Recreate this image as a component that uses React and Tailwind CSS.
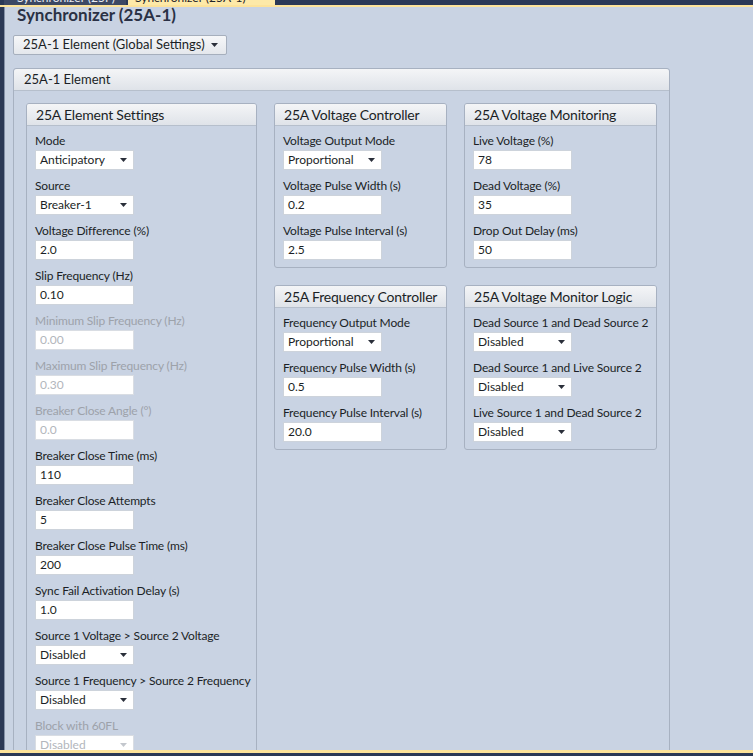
import React from 'react';

const font = { fontFamily: 'Lato, "Noto Sans", sans-serif' };

const Arrow = ({ disabled }) => (
  <svg width="7" height="4" viewBox="0 0 7 4">
    <path d="M0 0h7L3.5 4z" fill={disabled ? '#c3c7cd' : '#2a2f3a'} />
  </svg>
);

function Field({ label, value, select, disabled }) {
  return (
    <div className="flex flex-col">
      <div
        className={`h-[16px] leading-[16px] text-[12px] tracking-[-0.15px] whitespace-nowrap ${
          disabled ? 'text-[#9da2aa]' : 'text-[#1b1f26]'
        }`}
      >
        {label}
      </div>
      <div
        className={`mt-[1px] h-[20px] w-[99px] bg-white border flex items-center justify-between pl-[4px] pr-[6px] text-[12px] ${
          disabled ? 'border-[#d9dde3] text-[#b2b6bc]' : 'border-[#cdd3db] text-[#1b1f26]'
        }`}
      >
        <span>{value}</span>
        {select && <Arrow disabled={disabled} />}
      </div>
    </div>
  );
}

function Panel({ title, className, children }) {
  return (
    <div className={`border border-[#a7b1c1] rounded-[3px] overflow-hidden ${className}`}>
      <div className="h-[22px] bg-gradient-to-b from-[#f4f5f7] to-[#dfe3e9] border-b border-[#b6bfcc] px-[9px] text-[14px] tracking-[-0.2px] leading-[21px] text-[#1b1f26] whitespace-nowrap">
        {title}
      </div>
      <div className="flex flex-col gap-[8px] px-[8px] pt-[7px] pb-[7px]">{children}</div>
    </div>
  );
}

export default function App() {
  return (
    <div className="w-[753px] h-[756px] bg-[#2b3956] flex flex-col overflow-hidden" style={font}>
      {/* tab strip, mostly scrolled out of view */}
      <div className="h-[5px] flex overflow-hidden">
        <div className="ml-[4px] w-[122px] bg-[#3c4864] text-[#e8ebf1] text-[12px] leading-[14px] pl-[13px] -mt-[9px] h-[14px] whitespace-nowrap">
          Synchronizer (25F)
        </div>
        <div className="ml-[2px] w-[147px] bg-[#fde9a8] text-[#1f2329] text-[12px] leading-[14px] pl-[7px] -mt-[9px] h-[14px] whitespace-nowrap">
          Synchronizer (25A-1)
        </div>
      </div>
      <div className="h-[2px] bg-[#fde39a]" />

      <div className="flex-1 flex min-h-0">
        <div className="w-[4px] bg-[#2b3956]" />
        <div className="flex-1 bg-[#c9d3e3] border-l border-[#8592a8] px-[8px] overflow-hidden">
          <div className="ml-[4px] text-[17px] leading-[16px] font-bold text-[#2a3145]">
            Synchronizer (25A-1)
          </div>
          <div className="mt-[12px] w-[214px] h-[20px] border border-[#a6afbd] rounded-[2px] bg-gradient-to-b from-[#f6f7f9] to-[#e4e7ec] flex items-center justify-between pl-[9px] pr-[8px] text-[13px] text-[#1b1f26] whitespace-nowrap">
            <span>25A-1 Element (Global Settings)</span>
            <Arrow />
          </div>

          <div className="mt-[13px] w-[657px] border border-[#a7b1c1] rounded-[3px]">
            <div className="h-[22px] bg-gradient-to-b from-[#f4f5f7] to-[#dfe3e9] border-b border-[#b6bfcc] px-[10px] text-[13px] leading-[21px] text-[#1b1f26] rounded-t-[3px]">
              25A-1 Element
            </div>
            <div className="flex items-start gap-[17px] pl-[12px] pt-[12px]">
              <Panel title="25A Element Settings" className="w-[231px]">
                <Field label="Mode" value="Anticipatory" select />
                <Field label="Source" value="Breaker-1" select />
                <Field label="Voltage Difference (%)" value="2.0" />
                <Field label="Slip Frequency (Hz)" value="0.10" />
                <Field label="Minimum Slip Frequency (Hz)" value="0.00" disabled />
                <Field label="Maximum Slip Frequency (Hz)" value="0.30" disabled />
                <Field label="Breaker Close Angle (°)" value="0.0" disabled />
                <Field label="Breaker Close Time (ms)" value="110" />
                <Field label="Breaker Close Attempts" value="5" />
                <Field label="Breaker Close Pulse Time (ms)" value="200" />
                <Field label="Sync Fail Activation Delay (s)" value="1.0" />
                <Field label="Source 1 Voltage > Source 2 Voltage" value="Disabled" select />
                <Field label="Source 1 Frequency > Source 2 Frequency" value="Disabled" select />
                <Field label="Block with 60FL" value="Disabled" select disabled />
              </Panel>

              <div className="grid grid-cols-[173px_193px] gap-[17px]">
                <Panel title="25A Voltage Controller">
                  <Field label="Voltage Output Mode" value="Proportional" select />
                  <Field label="Voltage Pulse Width (s)" value="0.2" />
                  <Field label="Voltage Pulse Interval (s)" value="2.5" />
                </Panel>
                <Panel title="25A Voltage Monitoring">
                  <Field label="Live Voltage (%)" value="78" />
                  <Field label="Dead Voltage (%)" value="35" />
                  <Field label="Drop Out Delay (ms)" value="50" />
                </Panel>
                <Panel title="25A Frequency Controller">
                  <Field label="Frequency Output Mode" value="Proportional" select />
                  <Field label="Frequency Pulse Width (s)" value="0.5" />
                  <Field label="Frequency Pulse Interval (s)" value="20.0" />
                </Panel>
                <Panel title="25A Voltage Monitor Logic">
                  <Field label="Dead Source 1 and Dead Source 2" value="Disabled" select />
                  <Field label="Dead Source 1 and Live Source 2" value="Disabled" select />
                  <Field label="Live Source 1 and Dead Source 2" value="Disabled" select />
                </Panel>
              </div>
            </div>
          </div>
        </div>
      </div>

      <div className="h-[3px] bg-[#fde39a]" />
      <div className="h-[3px] bg-[#2b3956]" />
    </div>
  );
}
